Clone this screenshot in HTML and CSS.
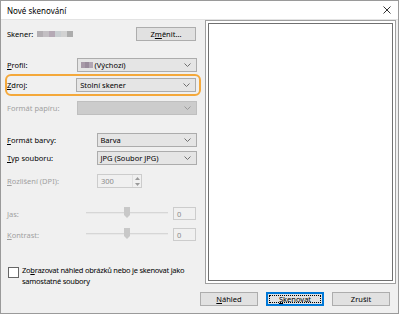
FILE: index.html
```html
<!DOCTYPE html>
<html>
<head>
    <title>Nové skenování</title>
    <link rel="stylesheet" href="styles.css">
</head>
<body>
    <div class="window">
        <div class="titlebar">
            <span class="title">Nové skenování</span>
            <svg class="close" width="8" height="8" viewBox="0 0 8 8">
                <path d="M0.5 0.5 L7.5 7.5 M7.5 0.5 L0.5 7.5" stroke="#333" stroke-width="1" fill="none"/>
            </svg>
        </div>

        <div class="main">
            <div class="left">
                <div class="row scanner-row">
                    <span class="label">Skener:</span>
                    <span class="blur">
                        <i style="background:#b3afb3"></i><i style="background:#c3bfc3"></i><i style="background:#b5a9b5"></i><i style="background:#c9ced1"></i><i style="background:#d2d2d2"></i><i style="background:#adadad"></i>
                    </span>
                    <button class="btn change-btn">Z<u>m</u>ěnit...</button>
                </div>

                <div class="separator"></div>

                <div class="row top-row profile-row">
                    <label class="label"><u>P</u>rofil:</label>
                    <div class="combo wide">
                        <span class="value">
                            <span class="blur small"><i style="background:#a89aa8"></i><i style="background:#9a8c9c"></i><i style="background:#b1a6b3"></i></span>
                            (Výchozí)
                        </span>
                        <svg class="chev" width="7" height="4" viewBox="0 0 7 4"><path d="M0.5 0.5 L3.5 3.5 L6.5 0.5" stroke="#707070" fill="none"/></svg>
                    </div>
                </div>

                <div class="highlight">
                    <div class="row top-row">
                        <label class="label"><u>Z</u>droj:</label>
                        <div class="combo wide">
                            <span class="value">Stolní skener</span>
                            <svg class="chev" width="7" height="4" viewBox="0 0 7 4"><path d="M0.5 0.5 L3.5 3.5 L6.5 0.5" stroke="#707070" fill="none"/></svg>
                        </div>
                    </div>
                </div>

                <div class="row top-row paper-row">
                    <label class="label disabled">Formát papíru:</label>
                    <div class="combo wide off">
                        <span class="value"></span>
                        <svg class="chev" width="7" height="4" viewBox="0 0 7 4"><path d="M0.5 0.5 L3.5 3.5 L6.5 0.5" stroke="#9a9a9a" fill="none"/></svg>
                    </div>
                </div>

                <div class="separator sep-mid"></div>

                <div class="row mid-row color-row">
                    <label class="label"><u>F</u>ormát barvy:</label>
                    <div class="combo narrow">
                        <span class="value">Barva</span>
                        <svg class="chev" width="7" height="4" viewBox="0 0 7 4"><path d="M0.5 0.5 L3.5 3.5 L6.5 0.5" stroke="#707070" fill="none"/></svg>
                    </div>
                </div>

                <div class="row mid-row type-row">
                    <label class="label"><u>T</u>yp souboru:</label>
                    <div class="combo narrow">
                        <span class="value">JPG (Soubor JPG)</span>
                        <svg class="chev" width="7" height="4" viewBox="0 0 7 4"><path d="M0.5 0.5 L3.5 3.5 L6.5 0.5" stroke="#707070" fill="none"/></svg>
                    </div>
                </div>

                <div class="row mid-row dpi-row">
                    <label class="label disabled"><u>R</u>ozlišení (DPI):</label>
                    <div class="spinner">
                        <span class="value">300</span>
                        <span class="arrows">
                            <svg width="5" height="3" viewBox="0 0 5 3"><path d="M0 3 L2.5 0 L5 3 Z" fill="#9a9a9a"/></svg>
                            <svg width="5" height="3" viewBox="0 0 5 3"><path d="M0 0 L2.5 3 L5 0 Z" fill="#9a9a9a"/></svg>
                        </span>
                    </div>
                </div>

                <div class="separator sep-low"></div>

                <div class="row slider-row jas-row">
                    <label class="label disabled">Jas:</label>
                    <div class="slider">
                        <div class="track"></div>
                        <svg class="thumb" width="6" height="11" viewBox="0 0 6 11"><path d="M0 0 H6 V8 L3 11 L0 8 Z" fill="#c8c8c8"/></svg>
                    </div>
                    <div class="numbox">0</div>
                </div>

                <div class="row slider-row contrast-row">
                    <label class="label disabled"><u>K</u>ontrast:</label>
                    <div class="slider">
                        <div class="track"></div>
                        <svg class="thumb" width="6" height="11" viewBox="0 0 6 11"><path d="M0 0 H6 V8 L3 11 L0 8 Z" fill="#c8c8c8"/></svg>
                    </div>
                    <div class="numbox">0</div>
                </div>

                <div class="check-row">
                    <span class="checkbox"></span>
                    <span class="check-text">Zo<u>b</u>razovat náhled obrázků nebo je skenovat jako samostatné soubory</span>
                </div>
            </div>

            <div class="preview">
                <div class="preview-inner"></div>
            </div>
        </div>

        <div class="footer">
            <button class="btn"><u>N</u>áhled</button>
            <button class="btn default"><u>S</u>kenovat</button>
            <button class="btn">Zrušit</button>
        </div>
    </div>
</body>
</html>
```

FILE: styles.css
```css
body {
    margin: 0;
    background: #fff;
    font-family: 'Noto Sans', 'DejaVu Sans', sans-serif;
    font-size: 7.5px;
    color: #000;
}

.window {
    width: 397px;
    height: 312px;
    border: 1px solid #9a9a9a;
    background: #f0f0f0;
    display: flex;
    flex-direction: column;
}

.titlebar {
    height: 18px;
    background: #fff;
    display: flex;
    align-items: center;
    justify-content: space-between;
    padding: 0 6px 0 6px;
    border-bottom: 1px solid #e3e3e3;
}

.title {
    font-size: 8px;
    color: #000;
}

.close {
    margin-right: 1px;
}

.main {
    display: flex;
    height: 265px;
}

.left {
    width: 190px;
    padding: 7px 8px 0 6px;
    display: flex;
    flex-direction: column;
}

.row {
    display: flex;
    align-items: center;
    height: 14px;
}

.label {
    white-space: nowrap;
}

.top-row .label {
    width: 70px;
}

.mid-row .label {
    width: 90px;
}

.slider-row .label {
    width: 79px;
}

.disabled {
    color: #a0a0a0;
}

.scanner-row .label {
    width: 30px;
}

.blur {
    display: flex;
    height: 6px;
    width: 36px;
    margin-right: 32px;
}

.blur i {
    width: 6px;
    height: 6px;
}

.blur.small {
    width: auto;
    display: inline-flex;
    margin-right: 2px;
    vertical-align: middle;
}

.blur.small i {
    width: 4px;
    height: 6px;
}

.btn {
    font-family: inherit;
    font-size: 7.5px;
    height: 14px;
    width: 58px;
    padding: 0;
    background: #e1e1e1;
    border: 1px solid #adadad;
    color: #000;
}

.change-btn {
    width: 60px;
    margin-left: auto;
    margin-right: 1px;
}

.separator {
    height: 1px;
    background: #a0a0a0;
    margin: 6px 0 11px 0;
}

.combo {
    height: 12px;
    background: #e5e5e5;
    border: 1px solid #acacac;
    display: flex;
    align-items: center;
    justify-content: space-between;
    padding: 0 5px 0 3px;
    box-sizing: content-box;
}

.combo.wide {
    width: 111px;
}

.combo.narrow {
    width: 91px;
}

.combo.off {
    background: #cccccc;
    border-color: #bfbfbf;
}

.value {
    display: flex;
    align-items: center;
}

.highlight {
    margin: 2px -4px 0 -2px;
    padding: 2px 3px 2px 0;
    border: 2px solid #f4a83a;
    border-radius: 6px;
}

.paper-row {
    margin-top: 5px;
}

.sep-mid {
    margin: 10px 0 8px 0;
}

.type-row {
    margin-top: 4px;
}

.dpi-row {
    margin-top: 9px;
}

.spinner {
    width: 40px;
    height: 12px;
    border: 1px solid #cccccc;
    background: #f0f0f0;
    display: flex;
    justify-content: space-between;
    padding-left: 3px;
    color: #8a8a8a;
    align-items: center;
}

.arrows {
    width: 8px;
    height: 12px;
    border-left: 1px solid #e0e0e0;
    display: flex;
    flex-direction: column;
    align-items: center;
    justify-content: space-around;
}

.sep-low {
    margin: 10px 0 9px 0;
}

.slider {
    position: relative;
    width: 82px;
    height: 13px;
}

.track {
    position: absolute;
    left: 0;
    right: 0;
    top: 5px;
    height: 1px;
    background: #d6d6d6;
    border-bottom: 1px solid #e8e8e8;
}

.thumb {
    position: absolute;
    left: 38px;
    top: 0;
}

.numbox {
    width: 18px;
    height: 11px;
    margin-left: 5px;
    border: 1px solid #cccccc;
    padding-left: 3px;
    color: #8a8a8a;
    display: flex;
    align-items: center;
}

.slider-row {
    height: 13px;
}

.contrast-row {
    margin-top: 8px;
}

.check-row {
    margin-top: 24px;
    display: flex;
    align-items: flex-start;
}

.checkbox {
    width: 9px;
    height: 9px;
    border: 1px solid #666;
    background: #fff;
    margin: 2px 3px 0 1px;
    flex: none;
}

.check-text {
    width: 178px;
    line-height: 11px;
    letter-spacing: -0.25px;
    color: #000;
}

.preview {
    border: 1px solid #a0a0a0;
    background: #fff;
    padding: 2px;
    box-sizing: border-box;
    width: 191px;
    height: 264px;
}

.preview-inner {
    height: 100%;
    border: 1px solid #707070;
    box-sizing: border-box;
}

.footer {
    display: flex;
    justify-content: flex-end;
    gap: 8px;
    padding: 7px 8px 0 0;
}

.default {
    border-color: #0078d7;
    box-shadow: inset 0 0 0 1px #0078d7;
    outline: 1px dotted #000;
    outline-offset: -4px;
}
```
